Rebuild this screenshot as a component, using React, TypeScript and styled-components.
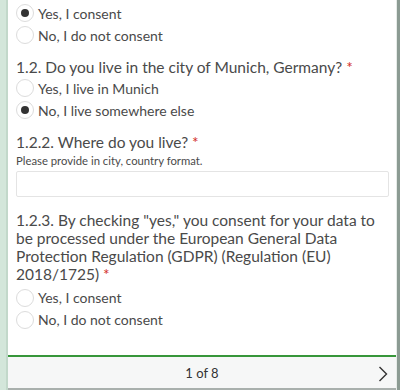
import styled, { createGlobalStyle } from "styled-components";

const Global = createGlobalStyle`
  html, body { margin: 0; padding: 0; overflow: hidden; background: #fff; }
  * { box-sizing: border-box; }
`;

const Frame = styled.div`
  display: flex;
  width: 400px;
  height: 390px;
  font-family: Lato, "Noto Sans", sans-serif;
  color: #4a4a4a;
`;

const LeftStrip = styled.div`
  width: 8px;
  background: #d3e6da;
  border-right: 2px solid #c2d8ca;
`;

const RightEdge = styled.div`
  width: 4px;
  background: #8c9b93;
  border-left: 1px solid #e6ebe8;
`;

const Panel = styled.div`
  flex: 1;
  display: flex;
  flex-direction: column;
  border-bottom: 2px solid #a9b0ad;
`;

const Content = styled.div`
  flex: 1;
  padding: 2px 7px 0 8px;
  display: flex;
  flex-direction: column;
`;

// required marker is drawn as a red asterisk after the label
const Question = styled.div<{ $required?: boolean }>`
  margin-top: 12px;
  font-size: 15.5px;
  line-height: 18px;
  &::after {
    content: ${({ $required }) => ($required ? '"*"' : "none")};
    color: #d3302a;
    margin-left: 4px;
  }
`;

const Hint = styled.div`
  font-size: 11.3px;
  line-height: 14px;
  margin-top: 3px;
`;

const Input = styled.div`
  margin-top: 3px;
  height: 26px;
  border: 1px solid #e4e4e4;
  border-radius: 2px;
  margin-bottom: 1.5px;
`;

const Options = styled.div<{ $top?: number }>`
  display: flex;
  flex-direction: column;
  margin-top: ${({ $top }) => $top ?? 0}px;
`;

const Option = styled.label`
  display: flex;
  align-items: center;
  gap: 4px;
  height: 22px;
  font-size: 14px;
`;

const Radio = styled.span<{ checked?: boolean }>`
  width: 18px;
  height: 18px;
  border-radius: 50%;
  border: 1px solid #dcdcdc;
  display: flex;
  align-items: center;
  justify-content: center;
  &::after {
    content: "";
    width: 8px;
    height: 8px;
    border-radius: 50%;
    background: ${({ checked }) => (checked ? "#333" : "transparent")};
  }
`;

const Footer = styled.div`
  height: 33px;
  border-top: 2px solid #37963a;
  background: #f6f7f7;
  display: flex;
  align-items: center;
  justify-content: center;
  position: relative;
  font-size: 13px;
  color: #333;
`;

const NextButton = styled.span`
  position: absolute;
  right: 8px;
  top: 9px;
  display: flex;
`;

type Item = { label: string; checked?: boolean };

const RadioGroup = ({ items, top }: { items: Item[]; top?: number }) => (
  <Options $top={top}>
    {items.map((it) => (
      <Option key={it.label}>
        <Radio checked={it.checked} />
        {it.label}
      </Option>
    ))}
  </Options>
);

export default function App() {
  return (
    <Frame>
      <Global />
      <LeftStrip />
      <Panel>
        <Content>
          <RadioGroup
            items={[{ label: "Yes, I consent", checked: true }, { label: "No, I do not consent" }]}
          />
          <Question $required>1.2. Do you live in the city of Munich, Germany?</Question>
          <RadioGroup
            top={1}
            items={[{ label: "Yes, I live in Munich" }, { label: "No, I live somewhere else", checked: true }]}
          />
          <Question $required>1.2.2. Where do you live?</Question>
          <Hint>Please provide in city, country format.</Hint>
          <Input />
          <Question $required>
            1.2.3. By checking "yes," you consent for your data to be processed under the European
            General Data Protection Regulation (GDPR) (Regulation (EU) 2018/1725)
          </Question>
          <RadioGroup top={4} items={[{ label: "Yes, I consent" }, { label: "No, I do not consent" }]} />
        </Content>
        <Footer>
          1 of 8
          <NextButton>
            <svg width="10" height="16" viewBox="0 0 10 16" fill="none" stroke="#333" strokeWidth="1.4">
              <path d="M1.5 1l7 7-7 7" />
            </svg>
          </NextButton>
        </Footer>
      </Panel>
      <RightEdge />
    </Frame>
  );
}
